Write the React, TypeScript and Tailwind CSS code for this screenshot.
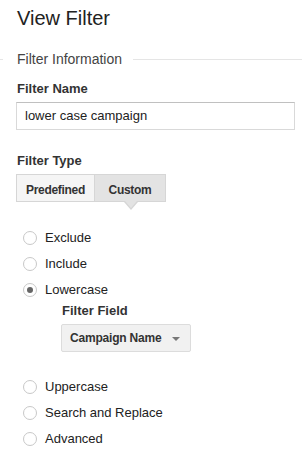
import React from "react";

function Radio({ label, checked = false }: { label: string; checked?: boolean }) {
  return (
    <div className="flex h-[26px] items-center pl-[23px]">
      <span className="flex h-[14px] w-[14px] items-center justify-center rounded-full border border-[#c8c8c8] bg-white">
        {checked && <span className="h-[6px] w-[6px] rounded-full bg-[#666]" />}
      </span>
      <span className="ml-[8px] text-[13px] leading-4 text-[#222]">{label}</span>
    </div>
  );
}

export default function App() {
  return (
    <div className="h-[453px] w-[302px] overflow-hidden bg-white font-['Liberation_Sans',Arial,sans-serif] text-[#222]">
      {/* title */}
      <h1 className="pl-[17px] pt-[6px] text-[20px] font-normal leading-[24px] text-[#222]">View Filter</h1>

      {/* fieldset legend */}
      <div className="mt-[21px] flex h-4 items-center">
        <div className="h-px w-[3px] bg-[#e5e5e5]" />
        <span className="ml-[14px] text-[14px] leading-4 text-[#444]">Filter Information</span>
        <div className="ml-[11px] h-px flex-1 bg-[#e5e5e5]" />
      </div>

      <div className="mt-[14px] pl-[17px] text-[13px] font-bold leading-4 text-[#333]">Filter Name</div>
      <div className="ml-[16px] mt-[5px] flex h-[28px] w-[279px] items-center border border-[#d9d9d9] border-t-[#c0c0c0] pl-[8px] text-[13px] leading-4 text-[#222]">
        lower case campaign
      </div>

      <div className="mt-[23px] pl-[17px] text-[13px] font-bold leading-4 text-[#333]">Filter Type</div>
      <div className="relative ml-[16px] mt-[5px] flex h-[28px] w-[150px] border border-[#d6d6d6] text-[12px] font-bold leading-4 tracking-[-0.3px] text-[#333]">
        <div className="flex w-[77px] items-center justify-center bg-[#f5f5f5] pt-[4px]">Predefined</div>
        <div className="flex flex-1 items-center justify-center border-l border-[#d6d6d6] bg-[#e3e3e3] pt-[4px]">Custom</div>
        {/* pointer under selected tab */}
        <div className="absolute left-[107px] top-[27px] h-0 w-0 border-x-[7px] border-t-[8px] border-x-transparent border-t-[#d6d6d6]" />
        <div className="absolute left-[108px] top-[26px] h-0 w-0 border-x-[6px] border-t-[7px] border-x-transparent border-t-[#e3e3e3]" />
      </div>

      <div className="mt-[23px]">
        <Radio label="Exclude" />
        <Radio label="Include" />
        <Radio label="Lowercase" checked />
      </div>

      <div className="pl-[61px]">
        <div className="ml-px text-[13px] font-bold leading-4 text-[#333]">Filter Field</div>
        <div className="mt-[5px] flex h-[28px] w-[130px] items-center justify-between rounded-[2px] border border-[#dcdcdc] bg-[#f1f1f1] pl-[8px] pr-[10px]">
          <span className="text-[12px] font-bold leading-4 tracking-[-0.2px] text-[#333]">Campaign Name</span>
          <span className="mt-[2px] h-0 w-0 border-x-[4px] border-t-[4px] border-x-transparent border-t-[#777]" />
        </div>
      </div>

      <div className="mt-[22px]">
        <Radio label="Uppercase" />
        <Radio label="Search and Replace" />
        <Radio label="Advanced" />
      </div>
    </div>
  );
}
